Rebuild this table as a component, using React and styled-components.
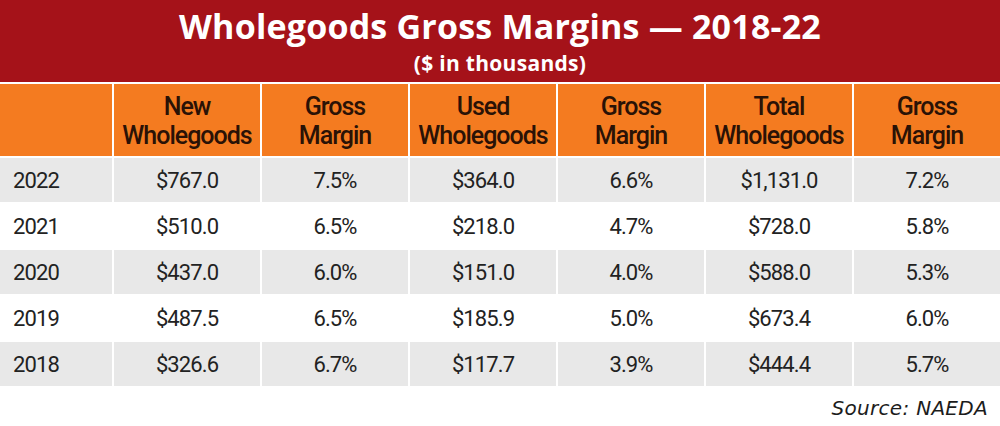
import React from "react";
import styled, { createGlobalStyle } from "styled-components";

const GlobalStyle = createGlobalStyle`
  html, body {
    margin: 0;
    padding: 0;
    background: #ffffff;
  }
`;

const Page = styled.div`
  width: 1000px;
  height: 426px;
  background: #ffffff;
  display: flex;
  flex-direction: column;
  overflow: hidden;
`;

const TitleBar = styled.div`
  height: 82px;
  background: #a51219;
  color: #ffffff;
  display: flex;
  flex-direction: column;
  align-items: center;
  font-family: "Open Sans", "Liberation Sans", sans-serif;
  font-weight: 700;
`;

const Title = styled.h1`
  margin: 3px 0 0;
  font-size: 34px;
  line-height: 47px;
  letter-spacing: 0.2px;
`;

const Subtitle = styled.div`
  font-size: 21px;
  line-height: normal;
  margin-top: -1px;
  letter-spacing: 0.3px;
`;

const Table = styled.div`
  margin-top: 2px;
  display: grid;
  grid-template-columns: 112px repeat(6, 1fr);
  grid-template-rows: 72px;
  grid-auto-rows: 44px;
  gap: 2px;
  font-family: Roboto, "Liberation Sans", sans-serif;
`;

const HeadCell = styled.div`
  background: #f47b20;
  color: #2a1206;
  display: flex;
  align-items: center;
  justify-content: center;
  text-align: center;
  font-size: 25px;
  line-height: 29px;
  font-weight: 500;
  letter-spacing: -1px;
  padding-top: 1px;
`;

const Cell = styled.div`
  background: ${(props) => (props.shaded ? "#e8e8e8" : "#ffffff")};
  color: #222222;
  display: flex;
  align-items: center;
  justify-content: ${(props) => (props.first ? "flex-start" : "center")};
  padding-left: ${(props) => (props.first ? "13px" : "0")};
  font-size: 22px;
  letter-spacing: -0.9px;
`;

const Source = styled.div`
  margin-top: 10px;
  padding-right: 12px;
  text-align: right;
  font-family: "DejaVu Sans", "Liberation Sans", sans-serif;
  font-style: italic;
  font-size: 20px;
  color: #1c1c1c;
  letter-spacing: 0.3px;
`;

const headers = [
  "",
  ["New", "Wholegoods"],
  ["Gross", "Margin"],
  ["Used", "Wholegoods"],
  ["Gross", "Margin"],
  ["Total", "Wholegoods"],
  ["Gross", "Margin"],
];

const rows = [
  ["2022", "$767.0", "7.5%", "$364.0", "6.6%", "$1,131.0", "7.2%"],
  ["2021", "$510.0", "6.5%", "$218.0", "4.7%", "$728.0", "5.8%"],
  ["2020", "$437.0", "6.0%", "$151.0", "4.0%", "$588.0", "5.3%"],
  ["2019", "$487.5", "6.5%", "$185.9", "5.0%", "$673.4", "6.0%"],
  ["2018", "$326.6", "6.7%", "$117.7", "3.9%", "$444.4", "5.7%"],
];

export default function App() {
  return (
    <Page>
      <GlobalStyle />
      <TitleBar>
        <Title>Wholegoods Gross Margins — 2018-22</Title>
        <Subtitle>($ in thousands)</Subtitle>
      </TitleBar>
      <Table>
        {headers.map((h, i) => (
          <HeadCell key={"h" + i}>
            {h && (
              <span>
                {h[0]}
                <br />
                {h[1]}
              </span>
            )}
          </HeadCell>
        ))}
        {rows.map((row, r) =>
          row.map((val, c) => (
            <Cell key={r + "-" + c} shaded={r % 2 === 0} first={c === 0}>
              {val}
            </Cell>
          ))
        )}
      </Table>
      <Source>Source: NAEDA</Source>
    </Page>
  );
}
